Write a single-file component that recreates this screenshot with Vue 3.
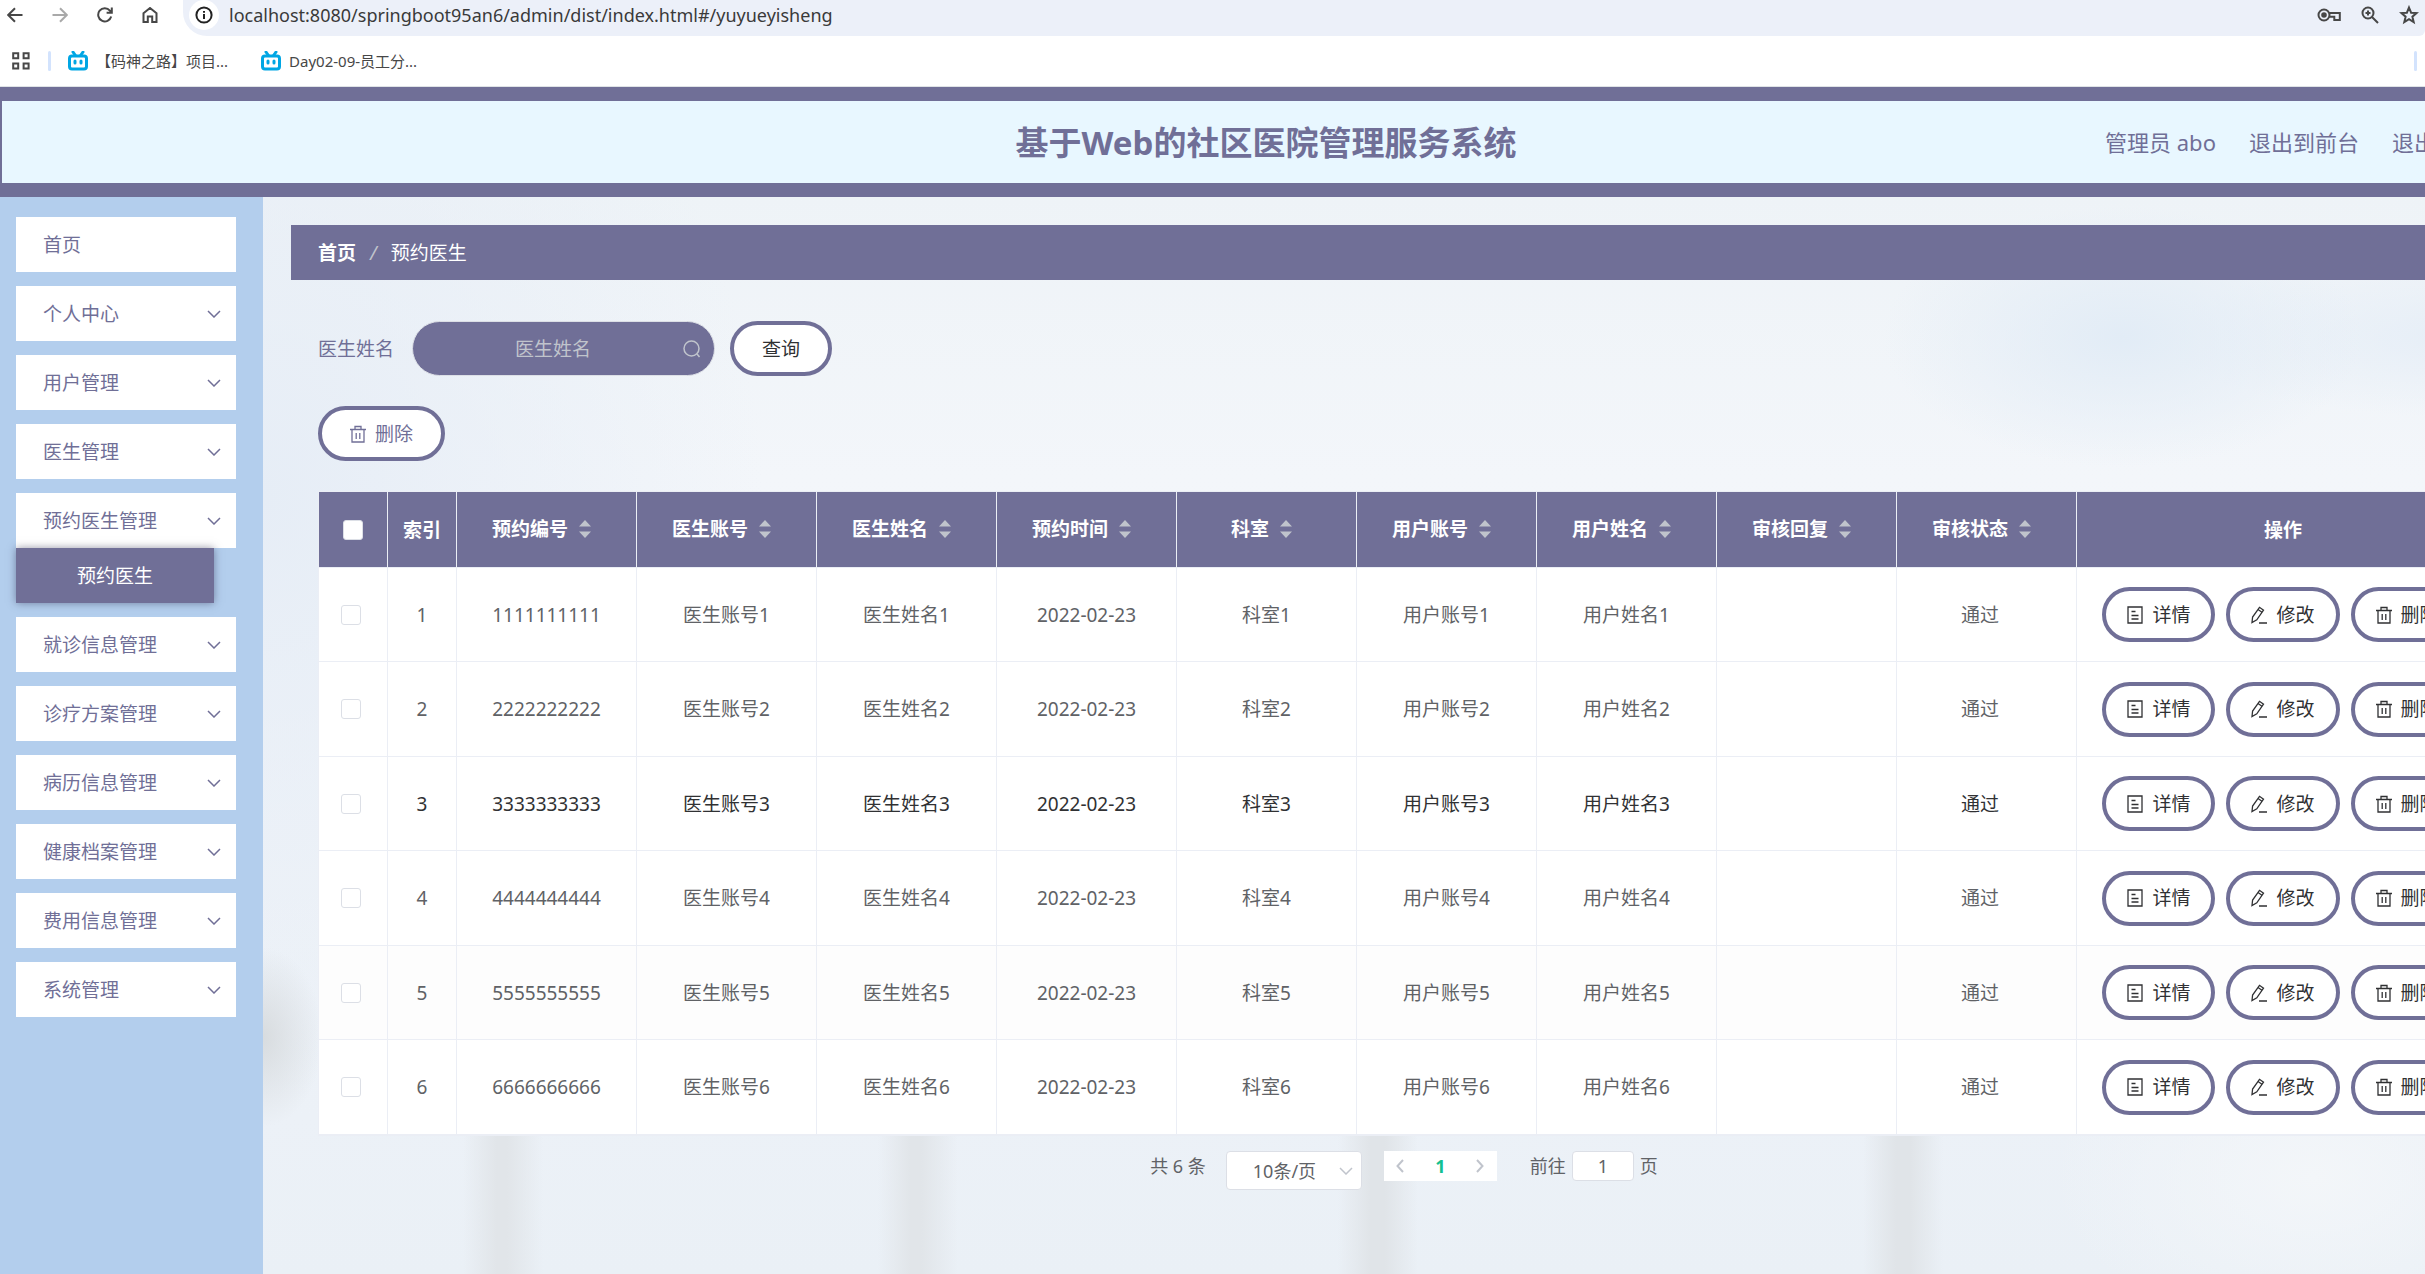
<script setup>
import { ref } from 'vue'

const menus = [
  { name: '个人中心' },
  { name: '用户管理' },
  { name: '医生管理' },
  { name: '预约医生管理', children: ['预约医生'] },
  { name: '就诊信息管理' },
  { name: '诊疗方案管理' },
  { name: '病历信息管理' },
  { name: '健康档案管理' },
  { name: '费用信息管理' },
  { name: '系统管理' },
]
const columns = ['预约编号', '医生账号', '医生姓名', '预约时间', '科室', '用户账号', '用户姓名', '审核回复', '审核状态']
const rows = [1, 2, 3, 4, 5, 6].map((n) => ({
  id: n,
  cells: [String(n).repeat(10), `医生账号${n}`, `医生姓名${n}`, '2022-02-23', `科室${n}`, `用户账号${n}`, `用户姓名${n}`, ''],
  status: '通过',
}))
const url = ref('localhost:8080/springboot95an6/admin/dist/index.html#/yuyueyisheng')
const keyword = ref('')
const pageSize = ref('10条/页')
const jump = ref('1')
</script>

<template>
  <div class="screen">
    <header class="browser">
      <div class="toolbar">
        <button class="tool" aria-label="后退">
          <svg viewBox="0 0 16 16"><path d="M15.5 8H1.5M8 1.2 1.2 8 8 14.8" /></svg>
        </button>
        <button class="tool dim" aria-label="前进">
          <svg viewBox="0 0 16 16"><path d="M.5 8h14M8 1.2 14.8 8 8 14.8" /></svg>
        </button>
        <button class="tool" aria-label="刷新">
          <svg viewBox="0 0 16 16"><path d="M14.2 9.5A6.6 6.6 0 1 1 12.9 3.6L14.6 5.6M14.8 .6v5.2H9.6" /></svg>
        </button>
        <button class="tool" aria-label="主页">
          <svg viewBox="0 0 16 16"><path d="M1.5 6.2 8 1l6.500 5.200V15h-4.300V9.500H5.800V15H1.500z" /></svg>
        </button>
        <div class="address">
          <span class="site-info">
            <svg viewBox="0 0 18 18"><circle cx="9" cy="9" r="7.600" /><path d="M9 8v5M9 5v1.800" /></svg>
          </span>
          <input v-model="url" class="url" aria-label="地址" />
          <div class="address-icons">
            <svg class="key" viewBox="0 0 24 16"><circle cx="7" cy="8" r="5.500" /><circle cx="7" cy="8" r="1.800" class="solid" /><path d="M12 6h10.800v7h-5.500v-3.200H12" /></svg>
            <svg class="glass" viewBox="0 0 18 18"><circle cx="7" cy="7" r="5.500" /><path d="m11 11 6 6M7 4.500v5M4.500 7h5" /></svg>
            <svg class="star" viewBox="0 0 20 20"><path d="m10 2.500 2.100 5.200 5.500.4-4.200 3.600 1.300 5.500L10 14.200l-4.700 3 1.300-5.500-4.200-3.600 5.500-.4z" /></svg>
          </div>
        </div>
      </div>
      <div class="bookmarks">
        <svg class="apps" viewBox="0 0 18 18"><path d="M1.200 1.200h5v5h-5zM11.600 1.200h5v5h-5zM1.200 11.600h5v5h-5zM11.600 11.600h5v5h-5z" /></svg>
        <i class="bar"></i>
        <a class="mark" href="#">
          <svg viewBox="0 0 20 20"><rect x="1.500" y="5" width="17" height="13" rx="2.500" /><path d="m5 1 2.500 3.500M15 1l-2.500 3.500M7 10v2M13 10v2" /></svg>
          <span>【码神之路】项目...</span>
        </a>
        <a class="mark" href="#">
          <svg viewBox="0 0 20 20"><rect x="1.500" y="5" width="17" height="13" rx="2.500" /><path d="m5 1 2.500 3.500M15 1l-2.500 3.500M7 10v2M13 10v2" /></svg>
          <span>Day02-09-员工分...</span>
        </a>
        <i class="bar end"></i>
      </div>
    </header>

    <div class="app">
      <header class="banner">
        <h1>基于Web的社区医院管理服务系统</h1>
        <div class="user">
          <span>管理员 abo</span>
          <a href="#">退出到前台</a>
          <a href="#">退出登录</a>
        </div>
      </header>

      <div class="body">
        <nav class="sidebar">
          <ul>
            <li><a class="item" href="#">首页</a></li>
            <li v-for="m in menus" :key="m.name">
              <button class="item">
                <span>{{ m.name }}</span>
                <svg class="chevron" viewBox="0 0 14 8"><path d="m1 1 6 6 6-6" /></svg>
              </button>
              <a v-for="c in m.children" :key="c" class="sub" href="#">{{ c }}</a>
            </li>
          </ul>
        </nav>

        <main class="main">
          <div class="crumbs">
            <a href="#">首页</a><i>/</i><span>预约医生</span>
          </div>
          <section class="content">
            <form class="search" @submit.prevent>
              <label for="doctor">医生姓名</label>
              <div class="field">
                <input id="doctor" v-model="keyword" placeholder="医生姓名" />
                <svg viewBox="0 0 18 18"><circle cx="8.500" cy="8.500" r="7.500" /><path d="m14 14 2.500 3" /></svg>
              </div>
              <button class="pill query">查询</button>
            </form>
            <button class="pill remove">
              <svg viewBox="0 0 16 18"><path d="M0 4.500h16M5 4V1.500h6V4M2 5v12h12V5M6.200 8v6M9.800 8v6" /></svg>删除
            </button>

            <table class="grid">
              <colgroup>
                <col class="narrow" /><col class="narrow" />
                <col v-for="c in columns" :key="c" class="wide" />
                <col />
              </colgroup>
              <thead>
                <tr>
                  <th><input type="checkbox" aria-label="全选" /></th>
                  <th>索引</th>
                  <th v-for="c in columns" :key="c">
                    <div class="sortable">
                      {{ c }}
                      <span class="caret"><svg viewBox="0 0 12 18"><path d="M0 6.500 6 0l6 6.500zM0 11.500h12L6 18z" /></svg></span>
                    </div>
                  </th>
                  <th>操作</th>
                </tr>
              </thead>
              <tbody>
                <tr v-for="r in rows" :key="r.id" :class="{ hover: r.id === 3, tint: r.id === 5 }">
                  <td class="tick"><input type="checkbox" :aria-label="`选择 ${r.id}`" /></td>
                  <td>{{ r.id }}</td>
                  <td v-for="(c, i) in r.cells" :key="i">{{ c }}</td>
                  <td class="status">{{ r.status }}</td>
                  <td>
                    <div class="ops">
                      <button class="pill">
                        <svg viewBox="0 0 16 18"><path d="M1 1h14v16H1zM4.500 5.500h4M4.500 9.500h7M4.500 13h7" /></svg>详情
                      </button>
                      <button class="pill">
                        <svg viewBox="0 0 16 18"><path d="M8 17h8M1 16.500l.6-5.500L8.500 1.300l4 2.800L5.800 13.800zM7 3.500l4 2.800" /></svg>修改
                      </button>
                      <button class="pill">
                        <svg viewBox="0 0 16 18"><path d="M0 4.500h16M5 4V1.500h6V4M2 5v12h12V5M6.200 8v6M9.800 8v6" /></svg>删除
                      </button>
                    </div>
                  </td>
                </tr>
              </tbody>
            </table>

            <div class="pagination">
              <span class="total">共 6 条</span>
              <div class="size">
                <select v-model="pageSize" aria-label="每页条数"><option>10条/页</option></select>
                <svg class="chevron" viewBox="0 0 14 8"><path d="m1 1 6 6 6-6" /></svg>
              </div>
              <div class="pager">
                <button aria-label="上一页"><svg viewBox="0 0 8 14"><path d="M7 1 1.500 7 7 13" /></svg></button>
                <button class="current">1</button>
                <button aria-label="下一页"><svg viewBox="0 0 8 14"><path d="m1 1 5.500 6L1 13" /></svg></button>
              </div>
              <label class="jump">前往 <input v-model="jump" /> 页</label>
            </div>
          </section>
        </main>
      </div>
    </div>
  </div>
</template>

<style>
body {
  margin: 0;
  overflow: hidden;
}
</style>

<style scoped>
* {
  box-sizing: border-box;
}
.screen {
  --violet: #706f97;
  display: flex;
  flex-direction: column;
  min-height: 100vh;
  overflow: hidden;
  background: #fff;
  color: #606266;
  font: 19px/28px "Noto Sans", "Noto Sans CJK SC", sans-serif;
}
button,
input,
select {
  font: inherit;
  color: inherit;
}
button {
  padding: 0;
  border: 0;
  background: none;
  cursor: pointer;
}
a {
  color: inherit;
  text-decoration: none;
}
svg {
  display: block;
  flex: none;
  fill: none;
  stroke: currentColor;
}

/* browser chrome */
.browser {
  border-bottom: 1px solid #dfe3e6;
  color: #474747;
}
.toolbar {
  display: flex;
  height: 36px;
  padding-left: 7px;
}
.tool {
  width: 16px;
  height: 30px;
  margin-right: 29px;
}
.tool svg {
  width: 16px;
  height: 16px;
  stroke-width: 2;
}
.dim {
  color: #a9a9a9;
}
.address {
  flex: 1;
  display: flex;
  align-items: center;
  gap: 10px;
  margin-left: -4px;
  padding: 0 6px 6px;
  background: #ecf0f9;
  border-radius: 0 0 6px 24px;
}
.site-info {
  display: grid;
  place-items: center;
  width: 30px;
  height: 30px;
  border-radius: 50%;
  background: #fff;
  color: #222;
}
.site-info svg {
  width: 18px;
  height: 18px;
  stroke-width: 2;
}
.url {
  flex: 1;
  height: 30px;
  padding: 0;
  border: 0;
  outline: 0;
  background: none;
  font-size: 18px;
  color: #3a3a3a;
}
.address-icons {
  display: flex;
  align-items: center;
  gap: 20px;
  stroke-width: 2;
}
.key {
  width: 24px;
  height: 16px;
}
.glass {
  width: 18px;
  height: 18px;
}
.star {
  width: 20px;
  height: 20px;
}
.solid {
  fill: currentColor;
}
.bookmarks {
  display: flex;
  align-items: center;
  height: 50px;
  padding: 0 8px 0 12px;
  font-size: 15px;
}
.apps {
  width: 18px;
  height: 18px;
  stroke-width: 2;
}
.bar {
  width: 3px;
  height: 20px;
  margin: 0 17px 0 18px;
  border-radius: 2px;
  background: #d3e3fd;
}
.end {
  margin: 0 0 0 auto;
}
.mark {
  display: flex;
  align-items: center;
  gap: 8px;
  margin-right: 33px;
}
.mark svg {
  width: 20px;
  height: 20px;
  stroke: #00a6e4;
  stroke-width: 3;
  stroke-linecap: round;
}

/* application frame, wider than the window */
.app {
  flex: 1;
  display: flex;
  flex-direction: column;
  width: calc(100% + 107px);
}
.banner {
  display: grid;
  grid-template-columns: 1fr auto 1fr;
  align-items: center;
  height: 110px;
  border: solid var(--violet);
  border-width: 14px 2px;
  background: #e8f7ff;
  color: var(--violet);
}
h1 {
  grid-column: 2;
  margin: 0;
  padding-top: 2px;
  font-size: 33px;
  line-height: 48px;
}
.user {
  display: flex;
  justify-content: flex-end;
  gap: 33px;
  padding-right: 50px;
  font-size: 22px;
}
.body {
  flex: 1;
  display: flex;
}
.sidebar {
  width: 263px;
  padding: 20px 27px 20px 16px;
  background: #b3ceed;
  color: var(--violet);
}
ul {
  display: flex;
  flex-direction: column;
  gap: 14px;
  margin: 0;
  padding: 0;
  list-style: none;
}
.item {
  display: flex;
  align-items: center;
  justify-content: space-between;
  width: 100%;
  height: 55px;
  padding: 0 15px 0 27px;
  background: #fff;
}
.chevron {
  width: 14px;
  height: 8px;
  stroke-width: 1.5;
}
.sub {
  display: grid;
  place-items: center;
  width: 198px;
  height: 55px;
  background: var(--violet);
  color: #fff;
  box-shadow: 0 0 8px rgba(48, 48, 80, 0.5);
}
.main {
  flex: 1;
  min-width: 0;
  padding: 28px 15px 40px 28px;
  background:
    radial-gradient(ellipse 60px 90px at 0 840px, #d8dcdf, transparent),
    radial-gradient(ellipse 240px 130px at 1860px 140px, #e2ecf6, transparent),
    radial-gradient(ellipse 300px 80px at 2200px 140px, #e6eef7, transparent),
    linear-gradient(90deg, transparent 200px, #e1e5e9 234px 244px, transparent 280px) 0 900px no-repeat,
    linear-gradient(90deg, transparent 615px, #e1e5e9 648px 658px, transparent 695px) 0 900px no-repeat,
    linear-gradient(90deg, transparent 1075px, #e0e4e8 1108px 1122px, transparent 1155px) 0 900px no-repeat,
    linear-gradient(90deg, transparent 1600px, #e0e4e8 1633px 1647px, transparent 1680px) 0 900px no-repeat,
    radial-gradient(ellipse 260px 160px at 2050px 980px, #f3f6f9, transparent),
    radial-gradient(ellipse 500px 600px at 0 300px, #e6edf6, transparent),
    linear-gradient(#eef3f7, #f3f6fa 280px, #ecf1f7 920px, #eaf0f6);
}
.crumbs {
  display: flex;
  align-items: center;
  gap: 14px;
  height: 55px;
  padding: 0 27px;
  background: var(--violet);
  color: #fff;
}
.crumbs a {
  font-weight: 700;
}
.crumbs i {
  color: #c0c4cc;
}
.content {
  padding: 41px 27px 0;
}
.search {
  display: flex;
  align-items: center;
  height: 55px;
  margin-bottom: 30px;
  color: var(--violet);
}
.field {
  position: relative;
  width: 303px;
  margin: 0 15px 0 18px;
}
.field input {
  width: 100%;
  height: 55px;
  padding: 0 41px 0 20px;
  border: 1px solid #dcdfe6;
  border-radius: 28px;
  outline: 0;
  background: var(--violet);
  color: #fff;
  text-align: center;
}
.field input::placeholder {
  color: #c0c4cc;
}
.field svg {
  position: absolute;
  right: 14px;
  top: 19px;
  width: 18px;
  height: 18px;
  color: #c0c4cc;
  stroke-width: 1.5;
}
.pill {
  display: flex;
  align-items: center;
  gap: 9px;
  height: 55px;
  padding: 0 21px;
  border: 4px solid var(--violet);
  border-radius: 28px;
  background: #fff;
  color: #303133;
  white-space: nowrap;
}
.pill svg {
  width: 16px;
  height: 18px;
  stroke-width: 1.3;
}
.query {
  padding: 0 28px;
}
.remove {
  margin-bottom: 30px;
  padding: 0 28px;
  color: var(--violet);
}

.grid {
  width: 100%;
  table-layout: fixed;
  border-spacing: 0;
  border: solid #ebeef5;
  border-width: 1px 0 1px 1px;
  background: #fff;
  text-align: center;
}
.narrow {
  width: 69px;
}
.wide {
  width: 180px;
}
th,
td {
  padding: 0;
  border: solid #ebeef5;
  border-width: 0 1px 1px 0;
}
th {
  height: 76px;
  background: var(--violet);
  color: #fff;
}
td {
  height: 94px;
}
tr:nth-child(even) td {
  height: 95px;
}
.hover {
  color: #303133;
}
.tint {
  background: #fdfdfd;
}
.tick {
  padding-right: 4px;
}
.status {
  padding-right: 13px;
}
input[type="checkbox"] {
  appearance: none;
  display: block;
  width: 20px;
  height: 20px;
  margin: 0 auto;
  border: 1px solid #dcdfe6;
  border-radius: 3px;
  background: #fff;
}
.sortable {
  display: flex;
  justify-content: center;
  align-items: center;
  padding-bottom: 2px;
}
.caret {
  display: grid;
  place-items: center;
  width: 33px;
}
.caret svg {
  width: 12px;
  height: 18px;
  fill: #c0c4cc;
  stroke: none;
}
.ops {
  display: flex;
  justify-content: center;
  gap: 11px;
}

.pagination {
  display: flex;
  justify-content: center;
  align-items: flex-start;
  margin-top: 15px;
  font-size: 18px;
  line-height: 30px;
}
.size {
  position: relative;
  margin: 0 22px 0 20px;
}
.size select {
  display: block;
  appearance: none;
  width: 136px;
  height: 39px;
  padding: 0 0 0 26px;
  border: 1px solid #dcdfe6;
  border-radius: 4px;
  background: #fff;
}
.size .chevron {
  position: absolute;
  right: 9px;
  top: 16px;
  color: #c0c4cc;
}
.pager {
  display: flex;
  justify-content: space-between;
  width: 113px;
  height: 30px;
  background: #fff;
}
.pager button {
  display: grid;
  place-items: center;
  width: 33px;
  color: #c0c4cc;
}
.pager svg {
  width: 8px;
  height: 14px;
  stroke-width: 2;
}
.pager .current {
  color: #13c091;
  font-weight: 700;
}
.jump {
  display: flex;
  gap: 6px;
  margin-left: 33px;
}
.jump input {
  width: 62px;
  height: 30px;
  padding: 0;
  border: 1px solid #dcdfe6;
  border-radius: 4px;
  background: #fff;
  text-align: center;
}
</style>
